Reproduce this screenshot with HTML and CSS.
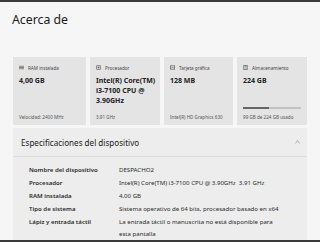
FILE: index.html
```html
<!DOCTYPE html>
<html lang="es">
<head>
<meta charset="utf-8">
<link rel="stylesheet" href="styles.css">
</head>
<body>
<div class="page">
  <h1 class="title">Acerca de</h1>
  <div class="cards">
    <div class="card">
      <div class="label"><svg class="ic" viewBox="0 0 6 6"><path d="M0 1.5h6M0 3h6M0 4.5h6" stroke="#555" stroke-width="0.8"/></svg>RAM instalada</div>
      <div class="value">4,00 GB</div>
      <div class="foot">Velocidad: 2400 MHz</div>
    </div>
    <div class="card">
      <div class="label"><svg class="ic" viewBox="0 0 6 6"><rect x="0.5" y="0.5" width="5" height="5" rx="1" fill="none" stroke="#555" stroke-width="0.8"/><rect x="2" y="2" width="2" height="2" fill="#555"/></svg>Procesador</div>
      <div class="value">Intel(R) Core(TM)<br>i3-7100 CPU @<br>3.90GHz</div>
      <div class="foot">3.91 GHz</div>
    </div>
    <div class="card">
      <div class="label"><svg class="ic" viewBox="0 0 6 6"><rect x="0.4" y="1" width="5.2" height="4" fill="none" stroke="#555" stroke-width="0.8"/><path d="M1.5 3h3" stroke="#555" stroke-width="0.6"/></svg>Tarjeta gráfica</div>
      <div class="value">128 MB</div>
      <div class="foot">Intel(R) HD Graphics 630</div>
    </div>
    <div class="card">
      <div class="label"><svg class="ic" viewBox="0 0 6 6"><rect x="1" y="0.4" width="4" height="5.2" fill="none" stroke="#555" stroke-width="0.8"/><path d="M2 2h2M2 3.5h2" stroke="#555" stroke-width="0.6"/></svg>Almacenamiento</div>
      <div class="value">224 GB</div>
      <div class="bar"><div class="fill" style="width:44%"></div></div>
      <div class="foot">99 GB de 224 GB usado</div>
    </div>
  </div>
  <div class="specs">
    <div class="spec-head">
      <span>Especificaciones del dispositivo</span>
      <svg class="chev" viewBox="0 0 8 5"><path d="M0.5 4.2L4 0.8L7.5 4.2" fill="none" stroke="#666" stroke-width="0.9"/></svg>
    </div>
    <div class="spec-body">
      <div class="k">Nombre del dispositivo</div><div class="v">DESPACHO2</div>
      <div class="k">Procesador</div><div class="v">Intel(R) Core(TM) i3-7100 CPU @ 3.90GHz&nbsp;&nbsp;3.91 GHz</div>
      <div class="k">RAM instalada</div><div class="v">4,00 GB</div>
      <div class="k">Tipo de sistema</div><div class="v">Sistema operativo de 64 bits, procesador basado en x64</div>
      <div class="k">Lápiz y entrada táctil</div><div class="v">La entrada táctil o manuscrita no está disponible para<br>esta pantalla</div>
    </div>
  </div>
</div>
</body>
</html>
```
FILE: styles.css
```css
html, body {
  margin: 0;
  padding: 0;
}
body {
  width: 320px;
  height: 242px;
  overflow: hidden;
  background: #f6f6f6;
  font-family: "Noto Sans", "Open Sans", sans-serif;
  color: #1b1b1b;
}
.page {
  height: 238px;
  border-top: 2px solid #3a3a3a;
  border-bottom: 2px solid #3a3a3a;
  overflow: hidden;
  display: flex;
  flex-direction: column;
}
.title {
  margin: 10px 0 0 12px;
  font-size: 12.3px;
  font-weight: 400;
  line-height: 16px;
  height: 16px;
}
.cards {
  margin: 29px 0 0 13px;
  width: 294px;
  display: grid;
  grid-template-columns: 73px 70px 69px 70px;
  column-gap: 4px;
  height: 73px;
}
.card {
  background: #e4e4e4;
  display: flex;
  flex-direction: column;
  padding: 7px 3px 5px 6px;
  position: relative;
  white-space: nowrap;
}
.label {
  font-size: 4.6px;
  color: #444;
  display: flex;
  align-items: center;
  gap: 4px;
  height: 7px;
}
.ic {
  width: 5px;
  height: 5px;
  flex: none;
}
.value {
  margin-top: 5px;
  font-size: 7px;
  font-weight: 700;
  line-height: 10px;
  color: #222;
}
.foot {
  margin-top: auto;
  font-size: 4.6px;
  color: #555;
}
.bar {
  margin-top: auto;
  height: 2px;
  background: #c2c2c2;
  margin-bottom: 5px;
  margin-right: 3px;
}
.bar + .foot {
  margin-top: 0;
}
.fill {
  height: 100%;
  background: #666;
}
.specs {
  margin: 3px 0 0 13px;
  width: 294px;
  background: #ededed;
  flex: 1;
}
.spec-head {
  height: 28px;
  border-bottom: 1px solid #dcdcdc;
  display: flex;
  align-items: center;
  justify-content: space-between;
  padding: 0 7px 0 8px;
  font-size: 8.1px;
  color: #222;
}
.chev {
  width: 5px;
  height: 4px;
}
.spec-body {
  display: grid;
  grid-template-columns: 90px 1fr;
  padding: 6px 18px 0 16px;
  font-size: 6.1px;
  line-height: 13px;
  color: #2a2a2a;
}
.k {
  font-weight: 600;
}
.v:last-child {
  line-height: 12px;
  margin-top: 1px;
  white-space: nowrap;
}
```
